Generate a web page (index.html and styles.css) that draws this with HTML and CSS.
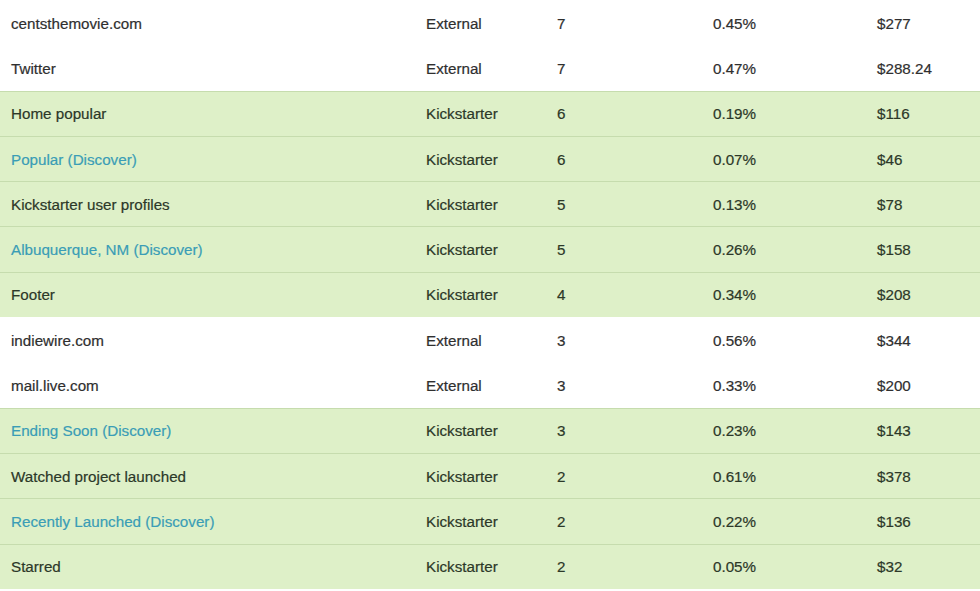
FILE: index.html
```html
<!DOCTYPE html>
<html>
<head>
<meta charset="utf-8">
<link rel="stylesheet" href="styles.css">
</head>
<body>
<div class="table">
  <div class="row"><span class="c1">centsthemovie.com</span><span class="c2">External</span><span class="c3">7</span><span class="c4">0.45%</span><span class="c5">$277</span></div>
  <div class="row"><span class="c1">Twitter</span><span class="c2">External</span><span class="c3">7</span><span class="c4">0.47%</span><span class="c5">$288.24</span></div>
  <div class="row ks first"><span class="c1">Home popular</span><span class="c2">Kickstarter</span><span class="c3">6</span><span class="c4">0.19%</span><span class="c5">$116</span></div>
  <div class="row ks"><span class="c1 link">Popular (Discover)</span><span class="c2">Kickstarter</span><span class="c3">6</span><span class="c4">0.07%</span><span class="c5">$46</span></div>
  <div class="row ks"><span class="c1">Kickstarter user profiles</span><span class="c2">Kickstarter</span><span class="c3">5</span><span class="c4">0.13%</span><span class="c5">$78</span></div>
  <div class="row ks"><span class="c1 link">Albuquerque, NM (Discover)</span><span class="c2">Kickstarter</span><span class="c3">5</span><span class="c4">0.26%</span><span class="c5">$158</span></div>
  <div class="row ks"><span class="c1">Footer</span><span class="c2">Kickstarter</span><span class="c3">4</span><span class="c4">0.34%</span><span class="c5">$208</span></div>
  <div class="row"><span class="c1">indiewire.com</span><span class="c2">External</span><span class="c3">3</span><span class="c4">0.56%</span><span class="c5">$344</span></div>
  <div class="row"><span class="c1">mail.live.com</span><span class="c2">External</span><span class="c3">3</span><span class="c4">0.33%</span><span class="c5">$200</span></div>
  <div class="row ks first"><span class="c1 link">Ending Soon (Discover)</span><span class="c2">Kickstarter</span><span class="c3">3</span><span class="c4">0.23%</span><span class="c5">$143</span></div>
  <div class="row ks"><span class="c1">Watched project launched</span><span class="c2">Kickstarter</span><span class="c3">2</span><span class="c4">0.61%</span><span class="c5">$378</span></div>
  <div class="row ks"><span class="c1 link">Recently Launched (Discover)</span><span class="c2">Kickstarter</span><span class="c3">2</span><span class="c4">0.22%</span><span class="c5">$136</span></div>
  <div class="row ks"><span class="c1">Starred</span><span class="c2">Kickstarter</span><span class="c3">2</span><span class="c4">0.05%</span><span class="c5">$32</span></div>
</div>
</body>
</html>
```
FILE: styles.css
```css
html, body {
  margin: 0;
  padding: 0;
  background: #ffffff;
}
body {
  font-family: "Liberation Sans", Arial, sans-serif;
  font-size: 15.2px;
  color: #2f2f2f;
  overflow: hidden;
  -webkit-text-stroke: 0.2px currentColor;
}
.table {
  display: flex;
  flex-direction: column;
  width: 980px;
}
.row {
  box-sizing: border-box;
  height: 45.3px;
  display: grid;
  grid-template-columns: 415px 131px 156px 164px 1fr;
  align-items: center;
  padding-left: 11px;
  padding-top: 1px;
}
.row.ks {
  background: #def0c8;
  border-top: 1px solid #c6dcae;
  padding-top: 0;
  color: #2c3828;
}
.link {
  color: #3a9db6;
}
```
